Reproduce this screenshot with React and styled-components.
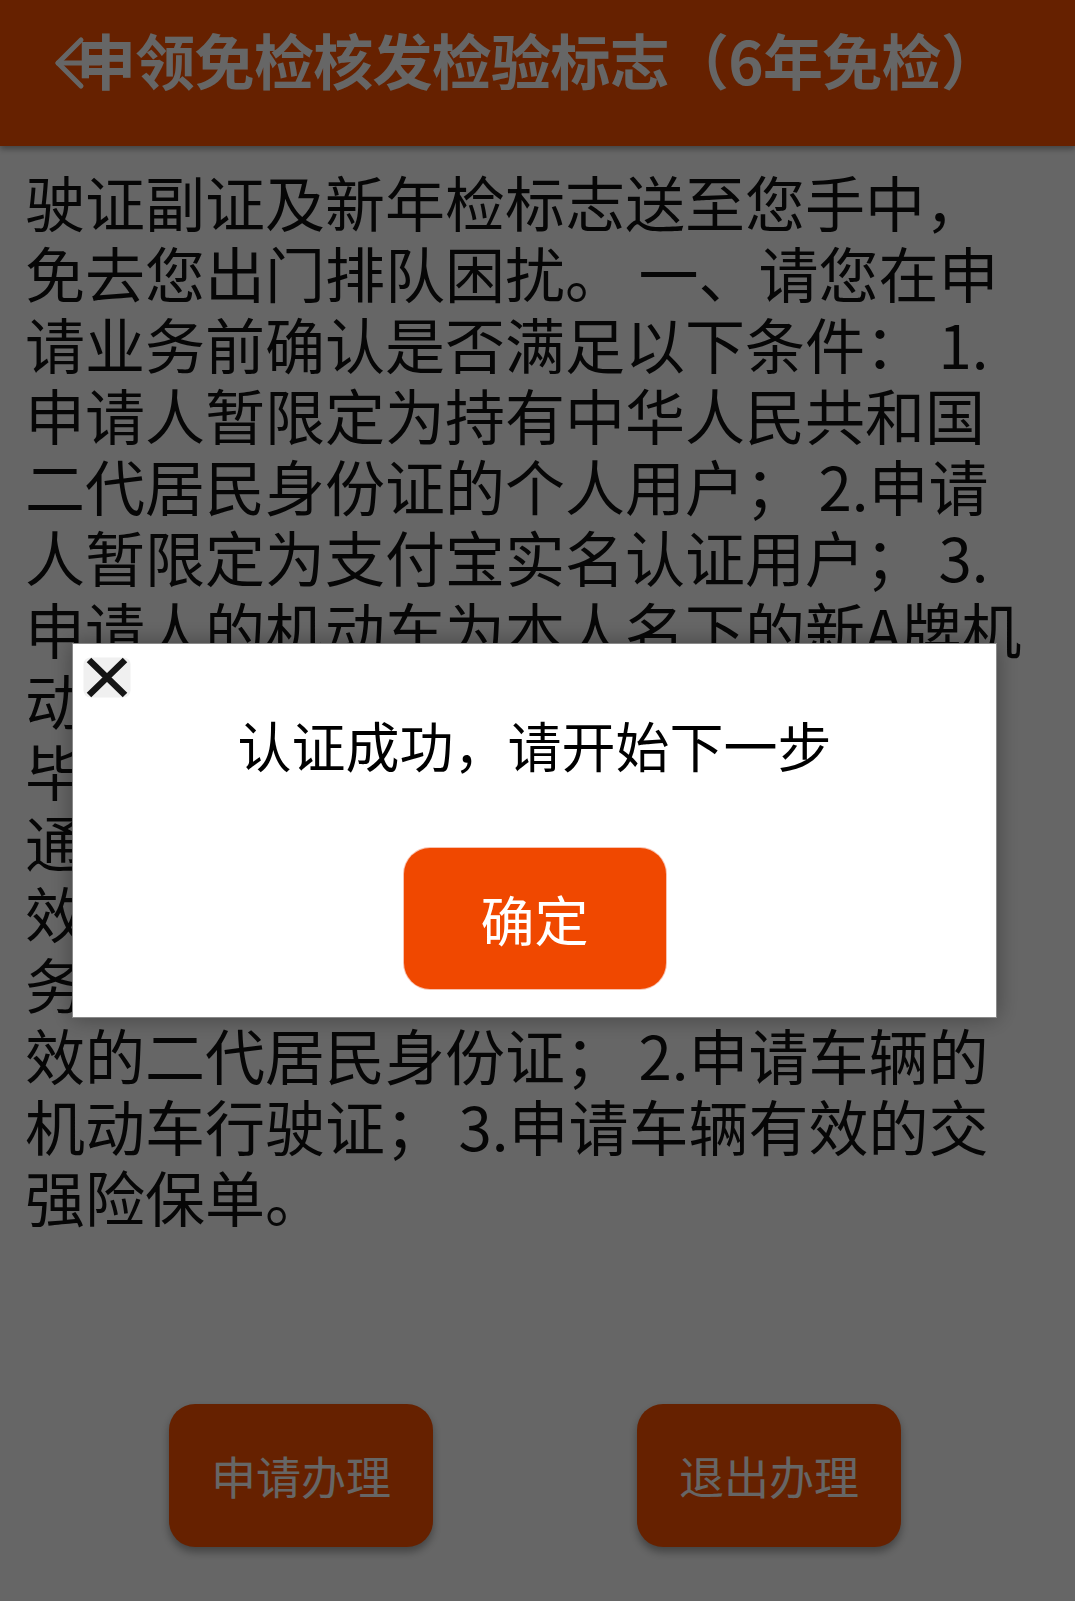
import React from "react";
import styled, { createGlobalStyle } from "styled-components";

const GlobalStyle = createGlobalStyle`
  html, body {
    margin: 0;
    padding: 0;
    background: #ffffff;
  }
  * { box-sizing: border-box; }
  body {
    font-family: "Noto Sans CJK SC", "Noto Sans", sans-serif;
  }
`;

const Page = styled.div`
  min-height: 100vh;
  display: flex;
  flex-direction: column;
  background: #ffffff;
`;

const Header = styled.header`
  position: relative;
  height: 146px;
  background: #ff5400;
  padding: 29px 0 0 76px;
  box-shadow: 0 3px 6px rgba(0, 0, 0, 0.35);
  z-index: 1;
`;

const BackIcon = styled.svg`
  position: absolute;
  left: 54px;
  top: 36px;
  width: 50px;
  height: 54px;
`;

const Title = styled.h1`
  margin: 0;
  font-size: 60px;
  line-height: 60px;
  font-weight: 700;
  letter-spacing: -0.7px;
  color: #ffffff;
  white-space: nowrap;
  font-family: "Noto Sans CJK SC", sans-serif;
`;

const Article = styled.div`
  padding: 19px 20px 0 25px;
  font-size: 60px;
  line-height: 71.1px;
  color: #111111;
`;

const Line = styled.span`
  display: block;
  white-space: nowrap;
`;

const ActionRow = styled.div`
  margin-top: auto;
  display: flex;
  justify-content: center;
  gap: 204px;
  padding: 0 5px 54px 0;
`;

const ActionButton = styled.button`
  width: 264px;
  height: 143px;
  border: none;
  border-radius: 26px;
  background: #ff5400;
  color: #ffffff;
  font-family: "Noto Sans CJK SC", sans-serif;
  font-size: 45px;
  box-shadow: 0 5px 8px rgba(0, 0, 0, 0.35);
  padding: 0;
`;

const Mask = styled.div`
  position: fixed;
  inset: 0;
  background: rgba(0, 0, 0, 0.6);
  z-index: 10;
`;

const Dialog = styled.div`
  position: fixed;
  left: 72px;
  top: 643px;
  width: 925px;
  height: 375px;
  background: #ffffff;
  border: 1px solid #8a8a8a;
  box-shadow: 0 0 22px rgba(0, 0, 0, 0.35);
  z-index: 11;
  display: flex;
  flex-direction: column;
  align-items: center;
  padding-top: 66px;
`;

const CloseIcon = styled.svg`
  position: absolute;
  left: 10px;
  top: 13px;
  width: 48px;
  height: 41px;
`;

const Message = styled.p`
  margin: 0;
  font-size: 54px;
  line-height: 70px;
  color: #000000;
`;

const ConfirmButton = styled.button`
  margin-top: 68px;
  width: 262px;
  height: 141px;
  border: none;
  border-radius: 26px;
  background: #f04800;
  color: #ffffff;
  font-family: "Noto Sans CJK SC", sans-serif;
  font-size: 54px;
  padding: 0;
  box-shadow: 0 0 0 1px rgba(240, 120, 80, 0.45);
`;

const lines = [
  "驶证副证及新年检标志送至您手中，",
  "免去您出门排队困扰。 一、请您在申",
  "请业务前确认是否满足以下条件： 1.",
  "申请人暂限定为持有中华人民共和国",
  "二代居民身份证的个人用户； 2.申请",
  "人暂限定为支付宝实名认证用户； 3.",
  "申请人的机动车为本人名下的新A牌机",
  "动车，交通安全违法行为已处理完",
  "毕； 4.机动车未发生过致人伤亡的交",
  "通事故； 5.机动车交强险在有",
  "效期内。 二、请您在申请办理本项业",
  "务前准备以下材料： 1.申请人有",
  "效的二代居民身份证； 2.申请车辆的",
  "机动车行驶证； 3.申请车辆有效的交",
  "强险保单。",
];

export default function App() {
  return (
    <>
      <GlobalStyle />
      <Page>
        <Header>
          <BackIcon viewBox="0 0 50 54" fill="none" stroke="#ffffff" strokeWidth="5" strokeLinecap="round" strokeLinejoin="round">
            <polyline points="27,4 4,27 27,50" />
            <line x1="4" y1="27" x2="46" y2="27" />
          </BackIcon>
          <Title>申领免检核发检验标志（6年免检）</Title>
        </Header>
        <Article>
          {lines.map((l, i) => (
            <Line key={i}>{l}</Line>
          ))}
        </Article>
        <ActionRow>
          <ActionButton>申请办理</ActionButton>
          <ActionButton>退出办理</ActionButton>
        </ActionRow>
      </Page>
      <Mask />
      <Dialog>
        <CloseIcon viewBox="0 0 48 41">
          <rect x="0.5" y="0.5" width="47" height="40" rx="7" fill="#f0f0f0" />
          <path d="M6 3 L42 38 M42 3 L6 38" stroke="#151515" strokeWidth="6.5" strokeLinecap="butt" />
        </CloseIcon>
        <Message>认证成功，请开始下一步</Message>
        <ConfirmButton>确定</ConfirmButton>
      </Dialog>
    </>
  );
}
